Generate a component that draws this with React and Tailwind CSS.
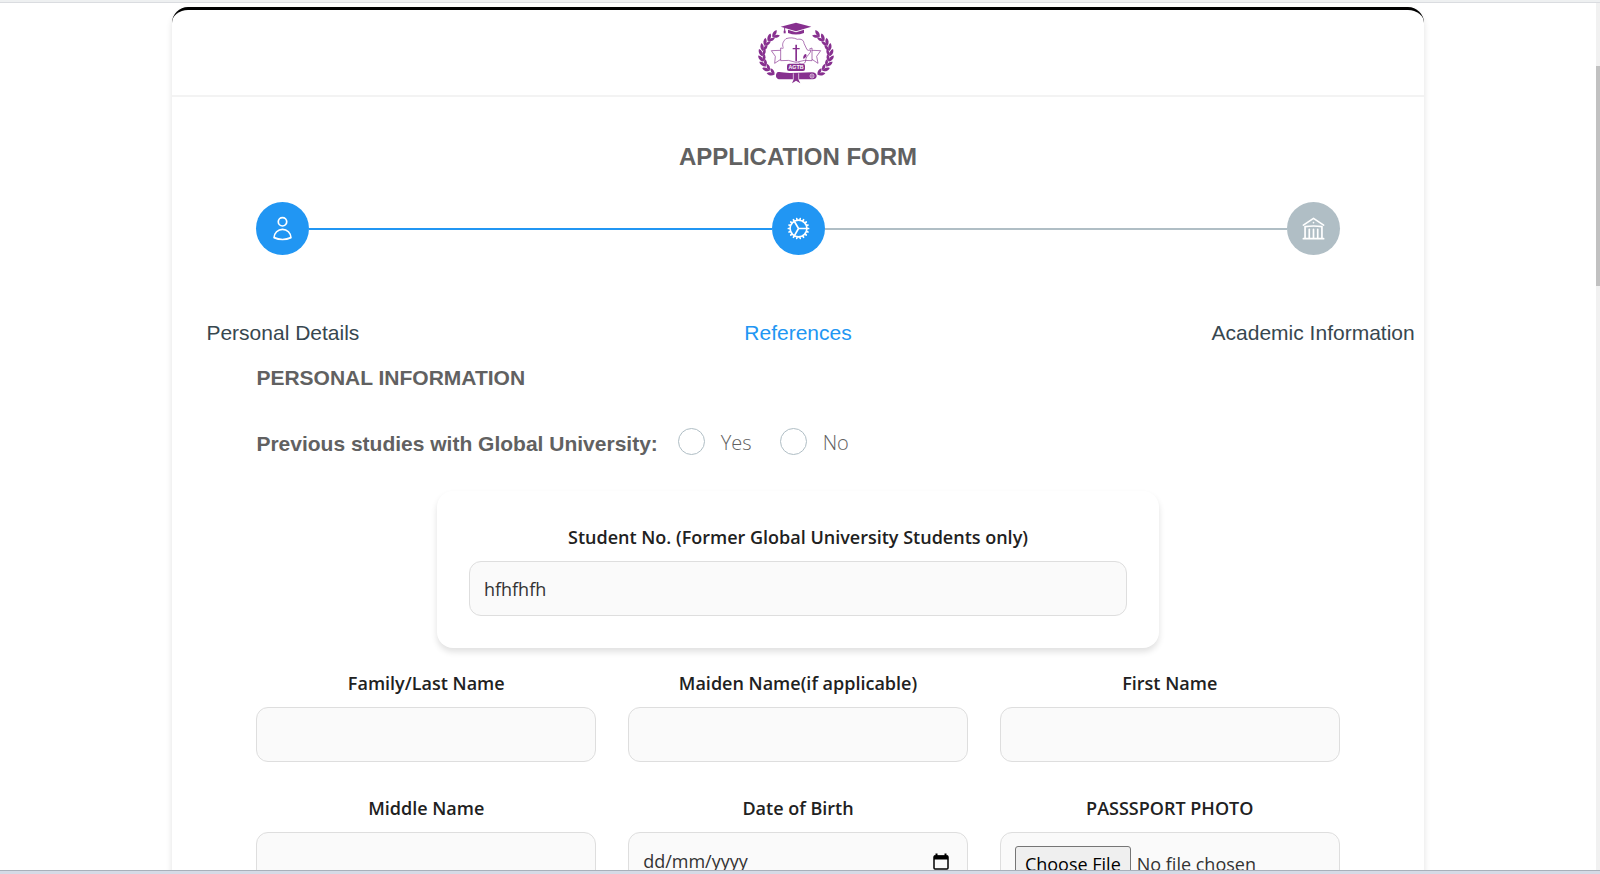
import React from "react";
import { HiOutlineUser, HiOutlineCog, HiOutlineBuildingLibrary } from "react-icons/hi2";

const arial = "font-['Liberation_Sans',Arial,sans-serif]";
const fieldBox =
  "h-[55px] w-full rounded-xl border border-[#dedede] bg-[#fafafa] px-[14px] text-[18px] text-[#333] outline-none focus:border-[#2196f3]";

const nodes = Array.from({ length: 9 }, (_, i) => {
  const t = ((132 + i * 12) * Math.PI) / 180;
  return {
    x: 114 + 101 * Math.cos(t),
    y: 99 - 76 * Math.sin(t),
    r: (Math.atan2(76 * Math.cos(t), 101 * Math.sin(t)) * 180) / Math.PI,
  };
});

function Laurel() {
  return (
    <g>
      {nodes.map((n, i) => (
        <g key={i} transform={`translate(${n.x} ${n.y}) rotate(${n.r})`}>
          <path d="M-4 0C0-9 9-13 18-10C15-2 6 3-4 0Z" />
          <path d="M-4 0C1 9 9 12 17 9C14 2 6-2-4 0Z" />
        </g>
      ))}
    </g>
  );
}

function Crest() {
  return (
    <svg viewBox="-6 0 240 186" className="mr-1 h-[62px] w-20 text-[#87308f]" fill="currentColor" role="img" aria-label="University crest">
      <Laurel />
      <g transform="translate(228 0) scale(-1 1)">
        <Laurel />
      </g>
      <path d="M114 2L160 14L114 28L68 14Z" />
      <path d="M90 23L114 31L138 23V33Q114 42 90 33Z" />
      <path d="M80 16V27" fill="none" stroke="currentColor" strokeWidth="3" />
      <path d="M77 26H83V34H77Z" />
      <g fill="none" stroke="currentColor" strokeWidth="2" strokeLinejoin="round">
        <path d="M76 77C70 65 78 56 84 50C96 46 108 47 118 52C130 50 137 54 138 64L147 83L151 85L159 84C158 95 145 102 144 110L142 120C136 130 126 128 122 121" />
        <path d="M76 79L68 78V116Q92 112 114 121Q140 112 162 116V78L154 81" />
        <path d="M68 85L40 86L52 103L50 124L68 112M162 85L188 86L176 103L180 124L162 112" />
      </g>
      <path d="M112 68H117V78H125V82H117V118H112V82H104V78H112Z" />
      <path d="M139 98C144 93 148 99 144 105L137 111C134 107 136 102 139 98Z" />
      <rect x="87" y="125" width="54" height="22" rx="6" />
      <text x="114" y="142" textAnchor="middle" fontSize="16" fontWeight="700" fill="#fff" className="font-['Liberation_Sans',Arial,sans-serif]">AGTB</text>
      <path d="M58 151C68 148 80 154 100 153L162 151C180 151 181 172 164 172H62C52 170 52 156 58 151Z" />
      <circle cx="162" cy="162" r="6" fill="none" stroke="#fff" strokeWidth="2" />
      <circle cx="162" cy="162" r="2" fill="#fff" />
      <path d="M106 154V172M122 154V172" stroke="#fff" strokeWidth="2" />
      <path d="M109 168L102 184L114 176L127 184L119 168Z" />
    </svg>
  );
}

function Step({ icon: Icon, done }) {
  return (
    <div className={`flex size-[53px] shrink-0 items-center justify-center rounded-full text-white ${done ? "bg-[#2196f3]" : "bg-[#b0bec5]"}`}>
      <Icon className="size-[27px]" aria-hidden="true" />
    </div>
  );
}

function StepLabel({ children, active }) {
  return (
    <div className="flex w-[53px] justify-center">
      <span className={`whitespace-nowrap text-[21px] leading-8 ${active ? "text-[#2196f3]" : "text-[#37474f]"}`}>{children}</span>
    </div>
  );
}

function Choice({ label }) {
  return (
    <label className="flex items-center gap-4 text-[20px] leading-8 font-light text-[#616161]">
      <input type="radio" name="previous-studies" className="mb-1 size-[27px] appearance-none rounded-full border border-[#b0bec5] checked:border-8 checked:border-[#2196f3]" />
      {label}
    </label>
  );
}

function Field({ id, label, children }) {
  return (
    <div className="flex min-w-0 flex-col gap-[10px]">
      <label htmlFor={id} className="text-center text-[18px] leading-7 font-semibold text-[#212121]">{label}</label>
      {children || <input id={id} type="text" className={fieldBox} />}
    </div>
  );
}

export default function App() {
  return (
    <div className="flex h-screen flex-col bg-white font-['Open_Sans','Segoe_UI',sans-serif]">
      <div className="h-[3px] shrink-0 border-b border-[#dadce0] bg-[#eef0f1]" />
      <div className="flex min-h-0 flex-1">
        <main className="min-w-0 flex-1 overflow-hidden pt-1">
          <div className="mx-auto w-[78.4%] rounded-t-2xl border-t-[3px] border-black shadow-[0_4px_6px_rgba(0,0,0,0.12)]">
            <header className="flex h-[87px] items-center justify-center border-b-2 border-[#f3f3f3]">
              <Crest />
            </header>
            <form className="px-[84px] pt-10">
              <h1 className={`text-center text-[24px] leading-10 font-bold text-[#616161] ${arial}`}>APPLICATION FORM</h1>
              <div className="mt-[25px] flex items-center">
                <Step icon={HiOutlineUser} done />
                <div className="h-[2px] flex-1 bg-[#2196f3]" />
                <Step icon={HiOutlineCog} done />
                <div className="h-[2px] flex-1 bg-[#b0bec5]" />
                <Step icon={HiOutlineBuildingLibrary} />
              </div>
              <div className={`mt-[62px] flex justify-between ${arial}`}>
                <StepLabel>Personal Details</StepLabel>
                <StepLabel active>References</StepLabel>
                <StepLabel>Academic Information</StepLabel>
              </div>
              <h2 className={`mt-[13px] text-[21px] leading-8 font-bold text-[#616161] ${arial}`}>PERSONAL INFORMATION</h2>
              <div role="radiogroup" aria-labelledby="previous-studies-label" className="mt-[30px] flex items-start">
                <span id="previous-studies-label" className={`mr-5 text-[21px] leading-10 font-bold text-[#616161] ${arial}`}>
                  Previous studies with Global University:
                </span>
                <div className="flex gap-7 pt-[3px]">
                  <Choice label="Yes" />
                  <Choice label="No" />
                </div>
              </div>
              <div className="mx-auto mt-[27px] w-2/3 rounded-2xl bg-white p-8 shadow-[0_4px_6px_rgba(0,0,0,0.12)]">
                <Field id="student-no" label="Student No. (Former Global University Students only)">
                  <input id="student-no" type="text" defaultValue="hfhfhfh" className={fieldBox} />
                </Field>
              </div>
              <div className="mt-[21px] grid grid-cols-3 gap-x-8 gap-y-8">
                <Field id="last-name" label="Family/Last Name" />
                <Field id="maiden-name" label="Maiden Name(if applicable)" />
                <Field id="first-name" label="First Name" />
                <Field id="middle-name" label="Middle Name" />
                <Field id="birth-date" label="Date of Birth">
                  <div className={`flex items-center justify-between pt-1 ${fieldBox}`}>
                    <input id="birth-date" type="text" placeholder="dd/mm/yyyy" className="min-w-0 flex-1 bg-transparent outline-none placeholder:text-[#333]" />
                    <button type="button" aria-label="Pick a date" className="mr-1">
                      <svg viewBox="0 0 16 18" className="h-[18px] w-4 text-black" fill="none" stroke="currentColor">
                        <rect x="1" y="3" width="14" height="13" rx="1" strokeWidth="1.500" />
                        <path d="M1 4.500H15" strokeWidth="4" />
                        <path d="M3.500 0.500V4M12.500 0.500V4" strokeWidth="2" />
                      </svg>
                    </button>
                  </div>
                </Field>
                <Field id="photo" label="PASSSPORT PHOTO">
                  <input
                    id="photo"
                    type="file"
                    className={`${fieldBox} py-[13px] file:mr-[6px] file:h-9 file:rounded-[3px] file:border file:border-solid file:border-[#767676] file:bg-[#efefef] file:px-[9px] file:text-black`}
                  />
                </Field>
              </div>
            </form>
          </div>
        </main>
        <div className="flex w-1 shrink-0 flex-col bg-[#f1f1f1] pt-[63px]" aria-hidden="true">
          <div className="h-[220px] bg-[#c1c1c1]" />
        </div>
      </div>
      <div className="h-1 shrink-0 border-t border-[#a9b0ba] bg-[#d5dae6]" />
    </div>
  );
}
